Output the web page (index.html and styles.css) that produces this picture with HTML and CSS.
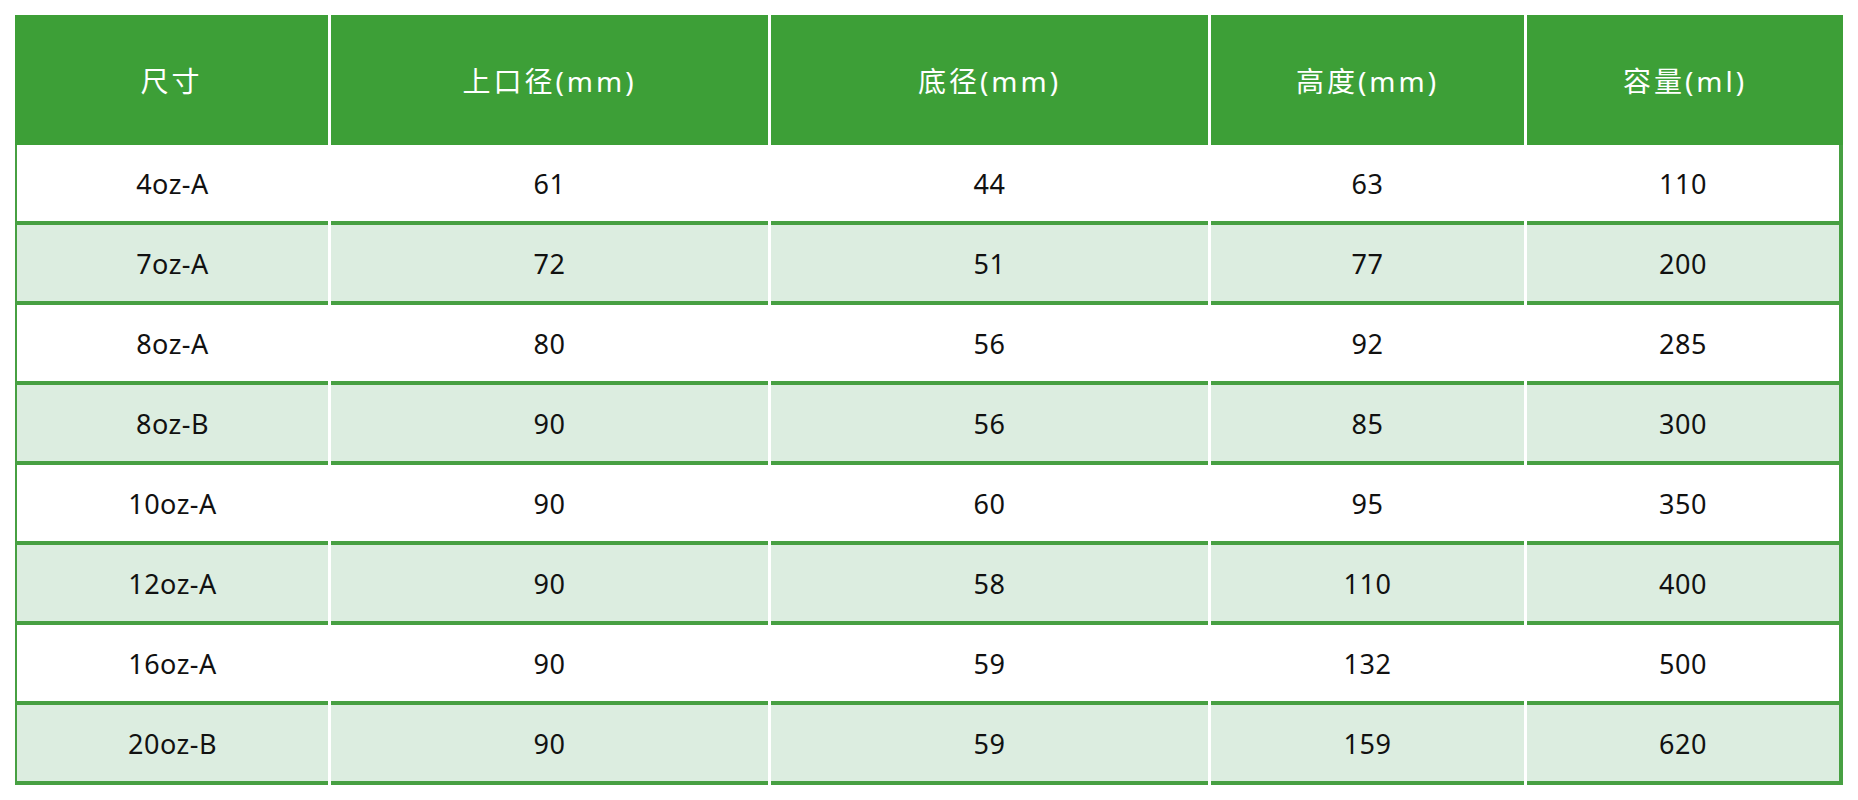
FILE: index.html
```html
<!DOCTYPE html>
<html lang="zh">
<head>
<meta charset="utf-8">
<title>尺寸表</title>
<link rel="stylesheet" href="styles.css">
</head>
<body>
<div class="spec">
  <div class="cell head">尺寸</div>
  <div class="cell head">上口径(mm)</div>
  <div class="cell head">底径(mm)</div>
  <div class="cell head">高度(mm)</div>
  <div class="cell head">容量(ml)</div>

  <div class="cell first">4oz-A</div><div class="cell">61</div><div class="cell">44</div><div class="cell">63</div><div class="cell last">110</div>
  <div class="cell first alt">7oz-A</div><div class="cell alt">72</div><div class="cell alt">51</div><div class="cell alt">77</div><div class="cell last alt">200</div>
  <div class="cell first">8oz-A</div><div class="cell">80</div><div class="cell">56</div><div class="cell">92</div><div class="cell last">285</div>
  <div class="cell first alt">8oz-B</div><div class="cell alt">90</div><div class="cell alt">56</div><div class="cell alt">85</div><div class="cell last alt">300</div>
  <div class="cell first">10oz-A</div><div class="cell">90</div><div class="cell">60</div><div class="cell">95</div><div class="cell last">350</div>
  <div class="cell first alt">12oz-A</div><div class="cell alt">90</div><div class="cell alt">58</div><div class="cell alt">110</div><div class="cell last alt">400</div>
  <div class="cell first">16oz-A</div><div class="cell">90</div><div class="cell">59</div><div class="cell">132</div><div class="cell last">500</div>
  <div class="cell first alt">20oz-B</div><div class="cell alt">90</div><div class="cell alt">59</div><div class="cell alt">159</div><div class="cell last alt">620</div>
</div>
</body>
</html>
```

FILE: styles.css
```css
html, body {
  margin: 0;
  padding: 0;
  background: #ffffff;
}

body {
  padding: 15px;
  font-family: "Noto Sans", "Noto Sans CJK SC", sans-serif;
  color: #111111;
}

.spec {
  display: grid;
  grid-template-columns: 313px 437px 437px 313px 316px;
  grid-template-rows: 130px repeat(8, 80px);
  column-gap: 3px;
  width: 1828px;
}

.cell {
  box-sizing: border-box;
  display: flex;
  align-items: center;
  justify-content: center;
  font-size: 27px;
  letter-spacing: 0.5px;
  background: #ffffff;
  border-bottom: 4px solid #47a042;
}

.cell.alt {
  background: #dcede0;
}

.cell.first {
  border-left: 2px solid #47a042;
}

.cell.last {
  border-right: 4px solid #47a042;
}

.cell.head {
  background: #3d9f37;
  color: #ffffff;
  border-bottom: none;
  letter-spacing: 3px;
  font-size: 28px;
}
```
